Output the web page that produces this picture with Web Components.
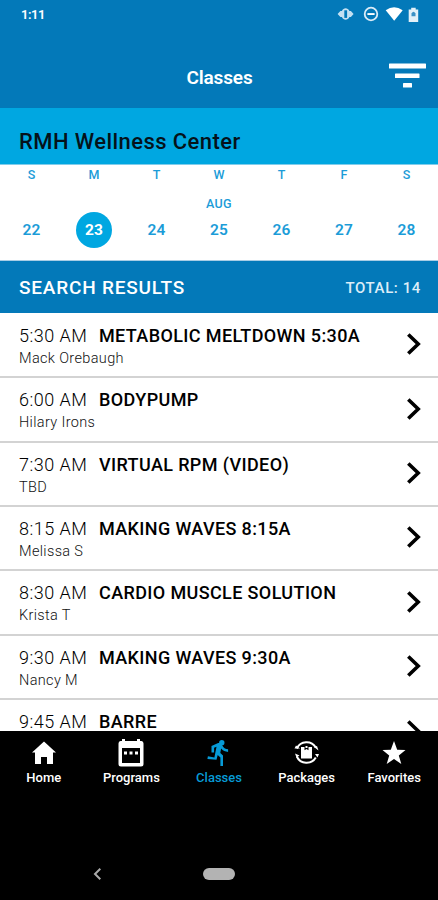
<!DOCTYPE html>
<html lang="en">
<head>
<meta charset="utf-8">
<title>Classes</title>
<style>
html,body{margin:0;height:100%;background:#000}
body{font-family:Roboto,"Liberation Sans",sans-serif}
</style>
</head>
<body>
<classes-app></classes-app>
<script>
class Base extends HTMLElement{
  connectedCallback(){
    if(this.shadowRoot)return;
    this.attachShadow({mode:'open'}).innerHTML=this.view();
  }
  at(n){return this.getAttribute(n)||''}
}
const def=(n,f)=>customElements.define(n,class extends Base{view(){return f(this)}});

def('status-bar',()=>`<style>
:host{display:flex;height:29px;padding:0 19px 0 21px;align-items:center;justify-content:space-between;color:#fff;font-size:13px;font-weight:600;box-sizing:border-box}
span{letter-spacing:-.5px}svg{display:block;margin-bottom:2px}
</style><span>1:11</span>
<svg width="82" height="18" viewBox="0 0 82 18">
<path d="M.6 9 3.400 6h1.500C6.400 2.300 10.900 2.300 12.400 6h1.500l2.700 3-2.700 3H12.400c-1.500 3.700-6 3.700-7.500 0H3.400z" fill="#c3e0f2"/><rect x="7.300" y="5.300" width="2.800" height="7.600" fill="#0379b9"/>
<circle cx="34" cy="9" r="6.300" fill="none" stroke="#d9ebf7" stroke-width="1.800"/><rect x="30.400" y="8.100" width="7.200" height="1.900" fill="#fff"/>
<path d="M48.700 5.300Q57 -.9 65.700 5.300L57.200 15.700z" fill="#fff"/>
<path d="M71.700 4.500h2.500V2.700h4.500v1.800h2.500v12.500H71.700z" fill="#e3f0f8"/><path d="M74.500 8.600q2-3.500 4 0v2.700h-4z" fill="#3d91c5"/></svg>`);

def('app-header',e=>`<style>
:host{display:grid;grid-template-columns:1fr auto 1fr;align-items:center;height:79px;padding:0 12px 0 13px;box-sizing:border-box;color:#fff}
h1{grid-column:2;margin:18px 0 0;font-size:19px;line-height:24px;font-weight:600;letter-spacing:-.15px}
svg{justify-self:end;margin-top:15px}
</style><h1>${e.at('heading')}</h1>
<svg width="37" height="26" viewBox="0 0 37 26" fill="#fff"><rect x="0" y="0.500" width="37" height="5" rx=".6"/><rect x="6" y="10.500" width="24.500" height="4.500" rx=".6"/><rect x="14" y="20" width="9" height="4.500" rx=".6"/></svg>`);

def('location-bar',()=>`<style>
:host{display:block;height:57px;background:#00a7e1;border-bottom:1px solid #80cdeb;box-sizing:border-box;padding:21px 19px 0;font-size:22px;letter-spacing:.42px;line-height:26px;font-weight:500;color:#05121a}
</style><slot></slot>`);

def('week-day',e=>`<style>
:host{display:flex;flex-direction:column;align-items:center;color:#1b9cd8;font-weight:500;flex:0 0 62.500px}
.d{font-size:12.500px;line-height:16px;height:28.500px}.m{font-size:12.500px;line-height:16px;height:16.500px;letter-spacing:.3px}
.n{width:36px;height:36px;border-radius:50%;display:grid;place-items:center;font-size:15.500px;font-weight:600;letter-spacing:.2px}
:host([selected]) .n{background:#00a7e1;color:#fff;font-weight:700}
</style><span class="d">${e.at('day')}</span><span class="m">${e.at('month')}</span><span class="n">${e.at('date')}</span>`);

def('week-strip',()=>`<style>
:host{display:flex;justify-content:center;height:96px;padding-top:2px;box-sizing:border-box;background:#fff;border-bottom:1px solid #a9cde5}
</style>
<week-day day="S" date="22"></week-day><week-day day="M" date="23" selected></week-day><week-day day="T" date="24"></week-day><week-day day="W" month="AUG" date="25"></week-day><week-day day="T" date="26"></week-day><week-day day="F" date="27"></week-day><week-day day="S" date="28"></week-day>`);

def('results-bar',e=>`<style>
:host{display:flex;justify-content:space-between;align-items:center;height:52px;padding:1px 17px 0 19px;box-sizing:border-box;background:#0379b9;color:#fff;font-weight:500;font-size:19px;letter-spacing:.8px}
.t{font-size:15px;letter-spacing:.6px;color:#dcedf8}
</style><span>${e.at('heading')}</span><span class="t">TOTAL: ${e.at('total')}</span>`);

def('class-row',e=>`<style>
:host{display:flex;flex:0 0 64.400px;box-sizing:border-box;border-bottom:2px solid #d3d3d3;padding:0 17px 0 19px;justify-content:space-between;color:#000}
.l{display:flex;padding-top:11px;height:21px;line-height:21px;font-size:18px;white-space:nowrap}
.time{width:80px;font-weight:300;letter-spacing:.5px}.name{font-weight:500;letter-spacing:.38px}
.who{font-size:14.500px;line-height:18px;margin-top:4px;font-weight:300;letter-spacing:.35px;color:#111}
svg{margin-top:18.500px;flex:none}
</style><div><div class="l"><span class="time">${e.at('time')}</span><span class="name"><slot></slot></span></div><div class="who">${e.at('coach')}</div></div>
<svg width="15" height="24" viewBox="0 0 15 24"><path d="m2.300 2.500 9.900 9.500-9.900 9.500" fill="none" stroke="#000" stroke-width="3.600"/></svg>`);

def('class-list',()=>`<style>
:host{display:flex;flex-direction:column;height:418px;padding-top:.8px;box-sizing:border-box;overflow:hidden;background:#fff}
</style><slot></slot>`);

const icons={
home:`<path d="M14 2.500 26 13.500h-3V25h-6v-7h-6v7H5V13.500H2z"/>`,
programs:`<path d="M5 0v2H3.500Q1.500 2 1.500 4.500V25q0 2.500 2.500 2.500h20q2.500 0 2.500-2.500V4.500Q26.500 2 24.500 2H23V0h-3v2H8V0zM5 9h18v15H5z" fill-rule="evenodd"/><path d="M7 12.500h3v3H7zm5.500 0h3v3h-3zm5.500 0h3v3h-3z"/>`,
classes:`<circle cx="16.800" cy="3.800" r="2.700"/><path d="M11.500 20.700 12.700 16l2.700 2.600V27H18V16.600l-2.700-2.700.8-4.300c1.800 2.100 4.200 3.300 7 3.300v-2.700c-2.300 0-4.300-1.200-5.300-3l-1.300-2c-.5-.8-1.300-1.300-2.200-1.300-.4 0-.7.1-1.100.2L6.500 7v6.400h2.600V8.700l2.400-1-2.100 10.900-6.500-1.300-.5 2.700z"/>`,
packages:`<path d="M3.800 9.500a10.700 10.700 0 0 1 19-1M22.800 18.500a10.700 10.700 0 0 1-19-1" fill="none" stroke="#fff" stroke-width="2"/><path d="m1.500 9.500 1.500-3 4 3zM24.500 18.500 26 15l-4 0zM21 8l3-1 1.500 4.500zM2 14.500l4.500 2-3 2z"/><path d="M8 8h3.500v3.200l2-1.200 2 1.200V8H19v11.500H8z"/><path d="M12.500 7h2v2h-2z"/>`,
favorites:`<path d="m14 2 3.200 8.800 8.300.2-6.700 5.400L21.300 25 14 19.900 6.700 25l2.500-8.600L2.500 11l8.300-.2z"/>`};
def('tab-item',e=>`<style>
:host{display:flex;flex-direction:column;align-items:center;flex:0 0 87.600px;color:#fff;font-size:13px;font-weight:500}
:host([active]){color:#079bd7}svg{display:block;margin-top:8px}span{line-height:16px;margin-top:3px}
</style><svg width="28" height="28" viewBox="0 0 28 28" fill="currentColor">${icons[e.at('icon')]}</svg><span><slot></slot></span>`);

def('tab-bar',()=>`<style>
:host{display:flex;justify-content:center;height:117px;background:#000}
</style><slot></slot>`);

def('system-nav',()=>`<style>
:host{display:flex;align-items:center;height:52px;background:#000;padding-left:92px;gap:101px}
.home{width:32px;height:12.500px;border-radius:7px;background:#b3b3b3}
</style><svg width="10" height="14" viewBox="0 0 10 14"><path d="M8.300 1.700 3 7l5.300 5.300" fill="none" stroke="#aaa" stroke-width="2"/></svg><div class="home"></div>`);

def('classes-app',()=>`<style>
:host{display:block;width:438px;height:900px;overflow:hidden;background:#000}
.top{background:#0379b9}
</style><div class="top"><status-bar></status-bar><app-header heading="Classes"></app-header></div>
<location-bar>RMH Wellness Center</location-bar><week-strip></week-strip>
<results-bar heading="SEARCH RESULTS" total="14"></results-bar>
<class-list>
<class-row time="5:30 AM" coach="Mack Orebaugh">METABOLIC MELTDOWN 5:30A</class-row>
<class-row time="6:00 AM" coach="Hilary Irons">BODYPUMP</class-row>
<class-row time="7:30 AM" coach="TBD">VIRTUAL RPM (VIDEO)</class-row>
<class-row time="8:15 AM" coach="Melissa S">MAKING WAVES 8:15A</class-row>
<class-row time="8:30 AM" coach="Krista T">CARDIO MUSCLE SOLUTION</class-row>
<class-row time="9:30 AM" coach="Nancy M">MAKING WAVES 9:30A</class-row>
<class-row time="9:45 AM">BARRE</class-row>
</class-list>
<tab-bar><tab-item icon="home">Home</tab-item><tab-item icon="programs">Programs</tab-item><tab-item icon="classes" active>Classes</tab-item><tab-item icon="packages">Packages</tab-item><tab-item icon="favorites">Favorites</tab-item></tab-bar>
<system-nav></system-nav>`);
</script>
</body>
</html>
